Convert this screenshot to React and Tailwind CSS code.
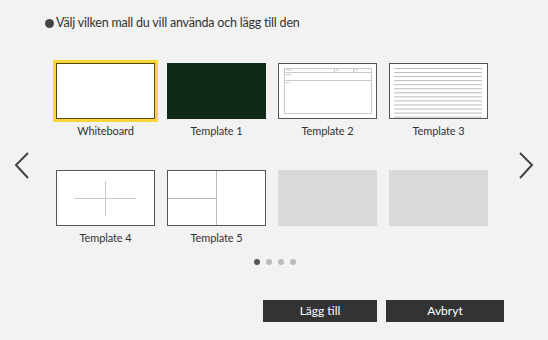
import React from "react";

const font = { fontFamily: "Lato, 'Open Sans', sans-serif" };

function Thumb({ children, className = "" }) {
  return (
    <div className={`relative w-[99px] h-[56px] ${className}`}>{children}</div>
  );
}

function Cell({ label, children }) {
  return (
    <div className="flex flex-col items-center w-[99px]">
      {children}
      {label ? (
        <div className="mt-[4px] h-[16px] text-[11px] leading-[16px] tracking-[-0.1px] text-[#333]">{label}</div>
      ) : (
        <div className="mt-[4px] h-[16px]" />
      )}
    </div>
  );
}

export default function App() {
  const lines = Array.from({ length: 13 }, (_, i) => i);
  return (
    <div className="w-[548px] h-[340px] bg-[#f2f2f2] flex flex-col" style={font}>
      <div className="flex items-center pl-[45px] pt-[14px] h-[32px]">
        <span className="w-[9px] h-[9px] rounded-full bg-[#444] mr-[2px]" />
        <span className="text-[12.5px] leading-[18px] tracking-[-0.2px] text-[#333]">
          Välj vilken mall du vill använda och lägg till den
        </span>
      </div>
      <div className="flex mt-[31px]">
        <div className="w-[56px] flex">
          <svg width="18" height="30" viewBox="0 0 18 30" className="ml-[13px] mt-[88px]">
            <polyline points="15,2 3,14 15,27" fill="none" stroke="#444" strokeWidth="2" />
          </svg>
        </div>
        <div className="grid grid-cols-[99px_99px_99px_99px] gap-x-[12px] gap-y-[31px]">
          <Cell label="Whiteboard">
            <Thumb className="bg-white border border-[#5a4a10] outline-3 outline-[#f7d636]" />
          </Cell>
          <Cell label="Template 1">
            <Thumb className="bg-[#0f2a16]" />
          </Cell>
          <Cell label="Template 2">
            <Thumb className="bg-white border border-[#555]">
              <svg width="97" height="54" className="absolute inset-0">
                <g stroke="#bbb" strokeWidth="0.8" fill="none">
                  <rect x="5.5" y="4.5" width="87" height="45" />
                  <line x1="5.5" y1="8.5" x2="92.5" y2="8.5" />
                  <line x1="5.5" y1="16.5" x2="92.5" y2="16.5" />
                  <line x1="55.5" y1="4.5" x2="55.5" y2="8.5" />
                  <line x1="74.5" y1="4.5" x2="74.5" y2="8.5" />
                </g>
                <g fill="#ccc">
                  <rect x="7" y="5.5" width="6" height="1" />
                  <rect x="57" y="5.5" width="3" height="1" />
                  <rect x="76" y="5.5" width="3" height="1" />
                  <rect x="7" y="10" width="5" height="1" />
                  <rect x="7" y="18" width="3" height="1" />
                </g>
              </svg>
            </Thumb>
          </Cell>
          <Cell label="Template 3">
            <Thumb className="bg-white border border-[#555]">
              <svg width="97" height="54" className="absolute inset-0">
                <g stroke="#aaa" strokeWidth="0.8">
                  {lines.map((i) => (
                    <line key={i} x1="4" x2="92" y1={4.5 + i * 4.05} y2={4.5 + i * 4.05} />
                  ))}
                </g>
              </svg>
            </Thumb>
          </Cell>
          <Cell label="Template 4">
            <Thumb className="bg-white border border-[#555]">
              <svg width="97" height="54" className="absolute inset-0">
                <g stroke="#c8c8c8" strokeWidth="1">
                  <line x1="17" x2="79" y1="27.5" y2="27.5" />
                  <line x1="48.5" x2="48.5" y1="10" y2="45" />
                </g>
              </svg>
            </Thumb>
          </Cell>
          <Cell label="Template 5">
            <Thumb className="bg-white border border-[#555]">
              <svg width="97" height="54" className="absolute inset-0">
                <g stroke="#bbb" strokeWidth="1">
                  <line x1="48.5" x2="48.5" y1="0" y2="54" />
                  <line x1="0" x2="48.5" y1="27.5" y2="27.5" />
                </g>
              </svg>
            </Thumb>
          </Cell>
          <Cell>
            <Thumb className="bg-[#d9d9d9]" />
          </Cell>
          <Cell>
            <Thumb className="bg-[#d9d9d9]" />
          </Cell>
        </div>
        <div className="flex-1 flex">
          <svg width="18" height="30" viewBox="0 0 18 30" className="ml-[29px] mt-[88px]">
            <polyline points="3,2 15,14 3,27" fill="none" stroke="#444" strokeWidth="2" />
          </svg>
        </div>
      </div>
      <div className="flex justify-center gap-[6px] mt-[13px] pl-[2px]">
        <span className="w-[6px] h-[6px] rounded-full bg-[#555]" />
        <span className="w-[6px] h-[6px] rounded-full bg-[#bbb]" />
        <span className="w-[6px] h-[6px] rounded-full bg-[#bbb]" />
        <span className="w-[6px] h-[6px] rounded-full bg-[#bbb]" />
      </div>
      <div className="flex justify-end gap-[9px] pr-[44px] mt-[35px]">
        <button className="w-[114px] h-[22px] bg-[#333] text-white text-[12px] leading-[22px]">Lägg till</button>
        <button className="w-[118px] h-[22px] bg-[#333] text-white text-[12px] leading-[22px]">Avbryt</button>
      </div>
    </div>
  );
}
